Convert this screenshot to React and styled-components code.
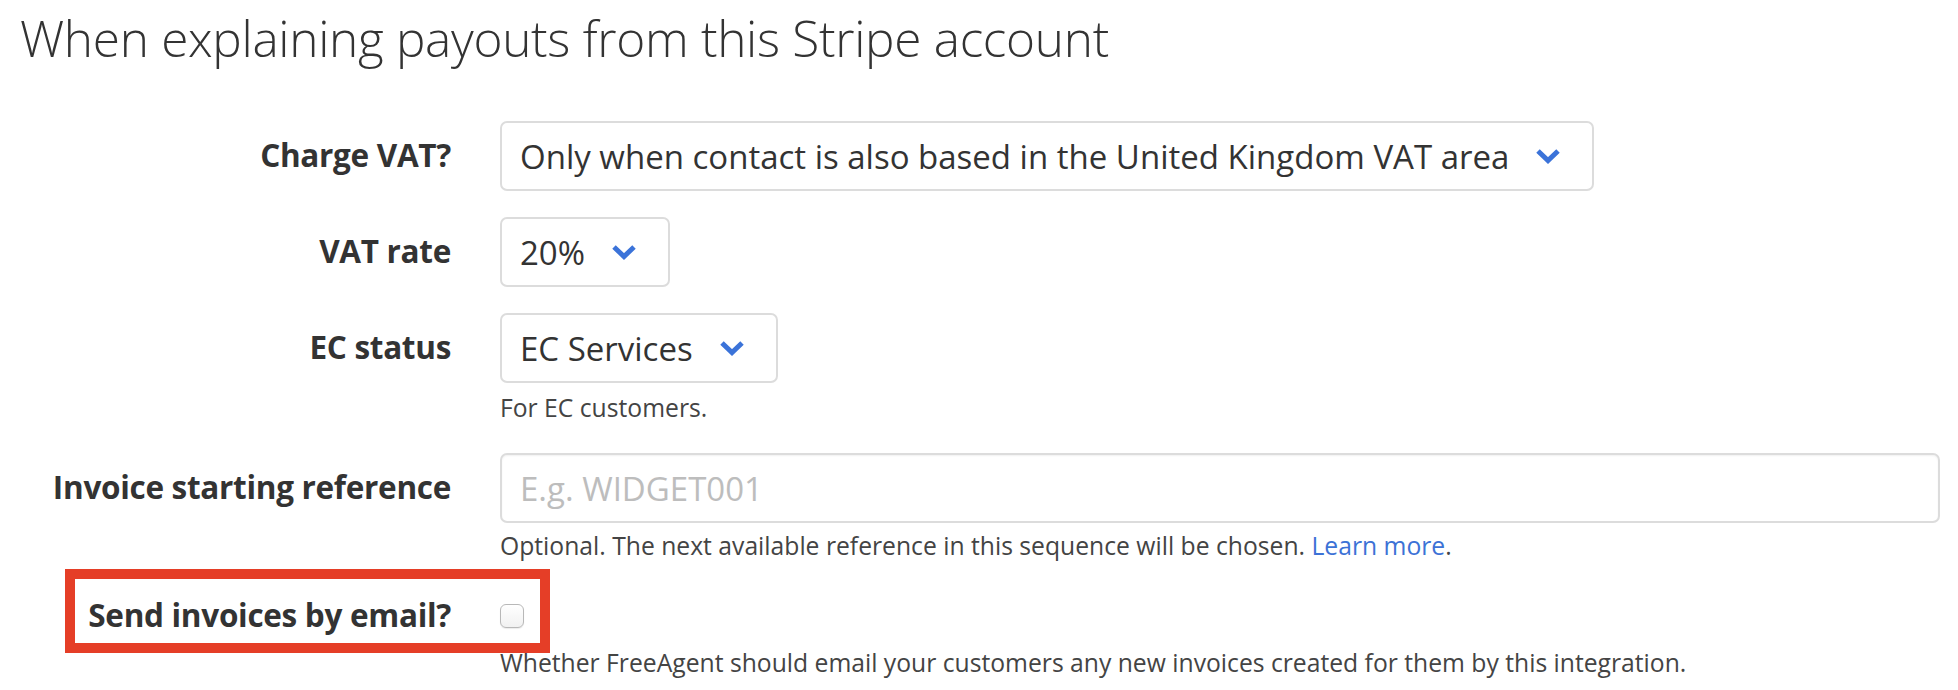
import React from "react";
import styled, { createGlobalStyle } from "styled-components";

const GlobalStyle = createGlobalStyle`
	html, body {
		margin: 0;
		padding: 0;
		background: #fff;
	}
	body {
		font-family: "Open Sans", "Noto Sans", sans-serif;
		color: #333;
	}
`;

const Page = styled.div`
	padding: 0 18px 0 20px;
`;

const Heading = styled.h2`
	margin: 0;
	padding-top: 6px;
	font-size: 49.5px;
	font-weight: 300;
	line-height: 64px;
	color: #333;
	letter-spacing: -0.3px;
`;

const Form = styled.div`
	margin-top: 51px;
	display: flex;
	flex-direction: column;
`;

const Field = styled.div`
	position: relative;
	display: grid;
	grid-template-columns: 431px 1fr;
	column-gap: 49px;
	align-items: center;
	margin-bottom: ${props => props.spacing ?? 26}px;
`;

const Label = styled.label`
	padding-bottom: 4px;
	text-align: right;
	font-size: 31.5px;
	font-weight: 700;
	color: #333;
	letter-spacing: -0.3px;
`;

const Control = styled.div`
	display: flex;
	align-items: center;
`;

const Select = styled.div`
	display: inline-flex;
	align-items: center;
	gap: 26px;
	height: 70px;
	box-sizing: border-box;
	padding: 0 31px 0 18px;
	border: 2px solid #dcdcdc;
	border-radius: 7px;
	font-size: 33px;
	color: #333;
	background: #fff;
	cursor: pointer;

	svg {
		flex: none;
		width: 26px;
		height: 16px;
	}
`;

const TextInput = styled.input`
	width: 100%;
	height: 70px;
	box-sizing: border-box;
	padding: 0 18px;
	border: 2px solid #dcdcdc;
	border-radius: 7px;
	box-shadow: inset 0 1px 2px rgba(0, 0, 0, 0.06);
	font-family: inherit;
	font-size: 33px;
	color: #333;
	outline: none;

	&::placeholder {
		color: #bdbdbd;
	}
`;

const Help = styled.p`
	grid-column: 2;
	margin: ${props => props.gap ?? 10}px 0 0;
	font-size: 24.7px;
	line-height: 30px;
	color: #444;
`;

const Link = styled.a`
	color: #3c72d6;
	text-decoration: none;
`;

const Checkbox = styled.input.attrs({ type: "checkbox" })`
	appearance: none;
	margin: 0;
	width: 24px;
	height: 24px;
	box-sizing: border-box;
	border: 1.5px solid #b8b8b8;
	border-radius: 6px;
	background: linear-gradient(#fff, #f1f1f1);
	box-shadow: 0 1px 1px rgba(0, 0, 0, 0.08);
`;

const CheckRow = styled.div`
	height: 64px;
	display: flex;
	align-items: center;
`;

const Highlight = styled.div`
	position: absolute;
	left: 45px;
	top: -15px;
	width: 485px;
	height: 84px;
	box-sizing: border-box;
	border: 10px solid #e53e27;
	pointer-events: none;
`;

const Chevron = () => (
	<svg viewBox="0 0 26 16">
		<polyline points="3,3 13,12.5 23,3" fill="none" stroke="#3b73d9" strokeWidth="5" strokeLinejoin="miter" />
	</svg>
);

const App = () => {
	return (
		<Page>
			<GlobalStyle />
			<Heading>When explaining payouts from this Stripe account</Heading>
			<Form>
				<Field>
					<Label>Charge VAT?</Label>
					<Control>
						<Select>Only when contact is also based in the United Kingdom VAT area<Chevron /></Select>
					</Control>
				</Field>
				<Field>
					<Label>VAT rate</Label>
					<Control>
						<Select>20%<Chevron /></Select>
					</Control>
				</Field>
				<Field spacing={30.5}>
					<Label>EC status</Label>
					<Control>
						<Select>EC Services<Chevron /></Select>
					</Control>
					<Help gap={9.5}>For EC customers.</Help>
				</Field>
				<Field spacing={23.5}>
					<Label>Invoice starting reference</Label>
					<Control>
						<TextInput placeholder="E.g. WIDGET001" />
					</Control>
					<Help gap={7.5}>
						Optional. The next available reference in this sequence will be chosen. <Link href="#">Learn more</Link>.
					</Help>
				</Field>
				<Field spacing={0}>
					<Highlight />
					<Label>Send invoices by email?</Label>
					<CheckRow>
						<Checkbox />
					</CheckRow>
					<Help gap={0}>
						Whether FreeAgent should email your customers any new invoices created for them by this integration.
					</Help>
				</Field>
			</Form>
		</Page>
	);
};

export default App;
